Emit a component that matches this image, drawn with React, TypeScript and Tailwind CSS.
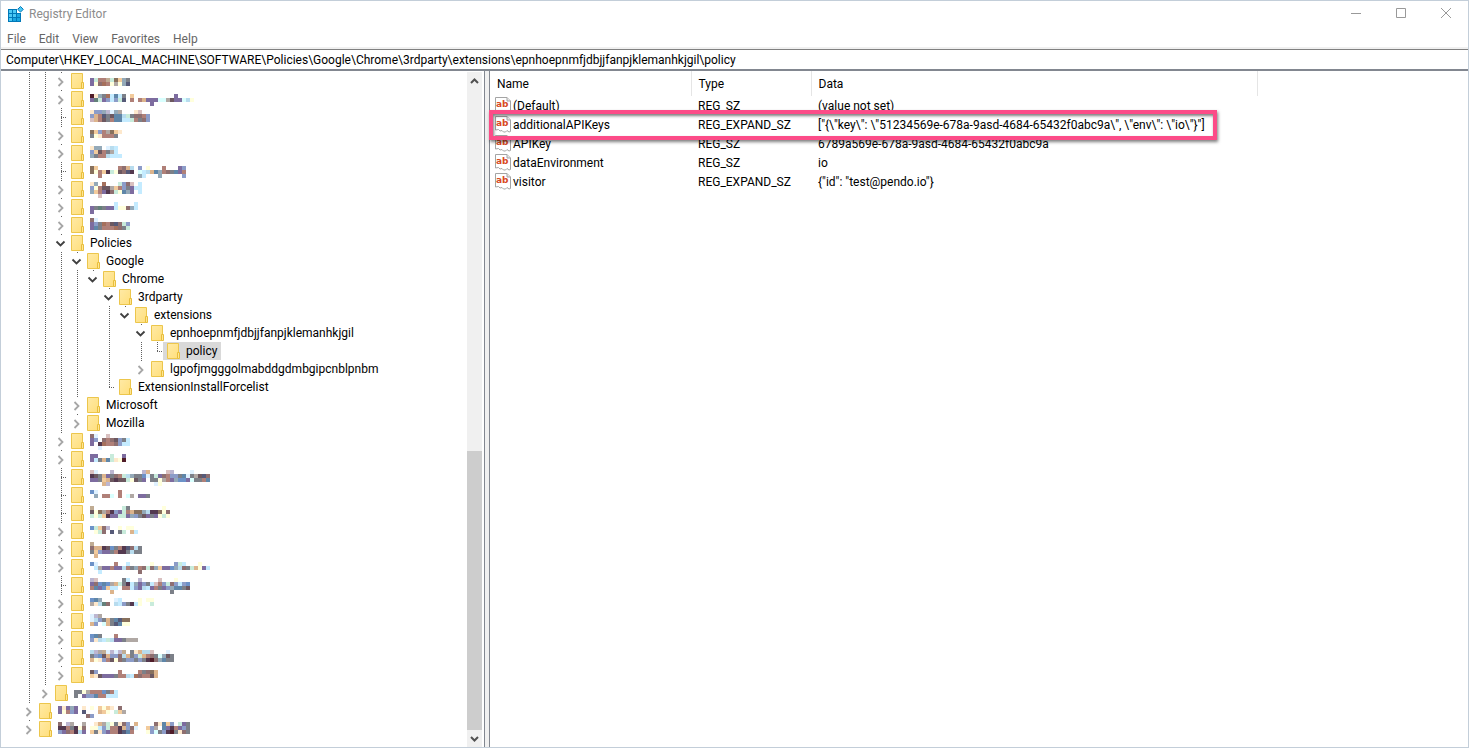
type TreeNode = {
  name: string;
  // one letter per 16px guide column, left to right
  guides: string;
  mosaic?: string[];
  selected?: boolean;
};

type RegistryValue = { name: string; type: string; data: string };

const REGISTRY_PATH =
  "Computer\\HKEY_LOCAL_MACHINE\\SOFTWARE\\Policies\\Google\\Chrome\\3rdparty\\extensions\\epnhoepnmfjdbjjfanpjklemanhkjgil\\policy";

const MENU = ["File", "Edit", "View", "Favorites", "Help"];

const COLORS: Record<string, string> = {
  p: "#7d6c9f",
  d: "#53394f",
  k: "#565a78",
  n: "#64807a",
  r: "#b08078",
  b: "#a5705c",
  o: "#87705c",
  t: "#dcb48c",
  m: "#f2cb9c",
  c: "#fde8cc",
  y: "#ffffdc",
  a: "#d9fffe",
  s: "#c4ebff",
  w: "#dff1ff",
  e: "#b8dcee",
  u: "#6c92c8",
  v: "#5f86a8",
  i: "#8c9cc8",
  h: "#94a9b8",
  q: "#c8ebdb",
  x: "#b0a8a4",
  z: "#c0ac94",
  f: "#8e6f70",
  j: "#6c5860",
  g: "#7c8088",
  L: "#bcb6d0",
  K: "#4f1c28",
  P: "#d9c0c0",
};

// guides: l = line, b = blank, t = tee, e = elbow, c = collapsed, o = open, x = open last child, z = collapsed last child
const TREE: TreeNode[] = [
  { name: "", guides: "llc", mosaic: ["", "pqrrzqomhg", "pyfbryxyhk"] },
  { name: "", guides: "llc", mosaic: ["", "Kchgbsvsg.m..........p", "pnqpisiqk.r.rtpppaaxjppaey", "...............p"] },
  { name: "", guides: "llt", mosaic: ["ciihLwhx...cP", "itrkgjvveqgffri", "Ptrjgrvvssqrgfi"] },
  { name: "", guides: "llc", mosaic: ["", "omirxomc", "gycrrrg"] },
  { name: "", guides: "llc", mosaic: ["chh.wes", "imjrgxs", "hgrresss"] },
  { name: "", guides: "llt", mosaic: ["", "om.....rfte.i.y...r...pi", "oyrmdqyjfkd.asetvhrfgvpr", "..r.........hs...h.....i"] },
  { name: "", guides: "llc", mosaic: ["ch.b...qifP.s", "iyrjjxmrigpss", "hmrpdfqyvhp.s", "..P"] },
  { name: "", guides: "llc", mosaic: ["", "......s....s", "pgngppsyyfhs", "p"] },
  { name: "", guides: "llc", mosaic: ["fw", "pigbrjkfqi", "pvgrrrbfgq"] },
  { name: "Policies", guides: "llo" },
  { name: "Google", guides: "lllo" },
  { name: "Chrome", guides: "llllx" },
  { name: "3rdparty", guides: "llllbo" },
  { name: "extensions", guides: "llllblx" },
  { name: "epnhoepnmfjdbjjfanpjklemanhkjgil", guides: "llllblbo" },
  { name: "policy", guides: "llllblble", selected: true },
  { name: "lgpofjmgggolmabddgdmbgipcnblpnbm", guides: "llllblbz" },
  { name: "ExtensionInstallForcelist", guides: "llllbe" },
  { name: "Microsoft", guides: "lllc" },
  { name: "Mozilla", guides: "lllz" },
  { name: "", guides: "llc", mosaic: ["fw..P", "pi.frfjigs", "p.dbrrfiss", "..w"] },
  { name: "", guides: "llc", mosaic: ["", "pp...q..p", "psgtvqcyK"] },
  { name: "", guides: "llt", mosaic: ["Pw...L.......Lt....PL....w", "djgtpgfrqehgguwgqpfriigvwgxjkf", "ppgmtjdjjqyjgp.ggyxrphuupaggrv", "...tL...........wy"] },
  { name: "", guides: "llt", mosaic: ["", "uw.....r", ".h.rra.r.ax.ppg"] },
  { name: "", guides: "llt", mosaic: ["z.......qg........y", "jyoxrdipqrtooheddoyf", "qyqmdppqqphigjpgpyqy"] },
  { name: "", guides: "llc", mosaic: ["", "uqmfL..y.yy", ".yqf.k.gq.ts"] },
  { name: "", guides: "llc", mosaic: ["z", "fttdjugrdkfeg", "gmippgrddgegg", ".t"] },
  { name: "", guides: "llc", mosaic: ["", "uw....r..s.....y.....iqs...y", ".sxpprpperghrfqfhmppuhefgqtyps", "..s.........f"] },
  { name: "", guides: "llt", mosaic: ["LP......gs..L....P...y", "pfuvuxtqgdshpigsPriqfisiu", "rvpumss.rrsipesprgpihvvgj", ".....t..............g"] },
  { name: "", guides: "llc", mosaic: ["", "uvh...ws....y.yy", "xcenf.esigdsy..q"] },
  { name: "", guides: "llc", mosaic: ["wLx", "weigtgvkoo", "ti.atgkvyy"] },
  { name: "", guides: "llc", mosaic: ["", "uvg...r", "icesqeppgxxx"] },
  { name: "", guides: "llc", mosaic: ["eLxzwLwLz.gcteeP...w", "giujtiifetgiqtrfgahjg", "tycirjyfgiigigdKfhvgg"] },
  { name: "", guides: "llz", mosaic: ["", "ji.....r....rgfot", "mcjpppgrresbfrrjt"] },
  { name: "", guides: "lz", mosaic: ["", "ggyxrrrugrs", "g.piivrrsss"] },
  { name: "", guides: "c", mosaic: ["", "pcphp.c.y.mymc.f.", "pyrip.k...tmy.qmx", ".......fi"] },
  { name: "", guides: "z", mosaic: ["f.Lx..x..ctxqygcfi.t....fcvmi.qpg", "ddrgdyf.yysiqrrdtifw..mix.vpdrpig", "ipfrdep.mgciprrdkvr...yiagidKgcfg"] },
];

const VALUES: RegistryValue[] = [
  { name: "(Default)", type: "REG_SZ", data: "(value not set)" },
  {
    name: "additionalAPIKeys",
    type: "REG_EXPAND_SZ",
    data: '["{\\"key\\": \\"51234569e-678a-9asd-4684-65432f0abc9a\\", \\"env\\": \\"io\\"}"]',
  },
  { name: "APIKey", type: "REG_SZ", data: "6789a569e-678a-9asd-4684-65432f0abc9a" },
  { name: "dataEnvironment", type: "REG_SZ", data: "io" },
  { name: "visitor", type: "REG_EXPAND_SZ", data: '{"id": "test@pendo.io"}' },
];

function RegeditIcon() {
  return (
    <svg width="16" height="16" viewBox="0 0 16 16" aria-hidden="true">
      <path d="M0 3h9v4h4v9H0z" fill="#0078b8" />
      <path d="M1 4h3v3H1zM5 4h3v3H5zM1 8h3v3H1zM5 8h3v3H5zM1 12h3v3H1z" fill="#4cc8f4" />
      <path d="M9 8h3v3H9zM5 12h3v3H5zM9 12h3v3H9z" fill="#19a5e0" />
      <path d="M12.500 .5l2.800 2.800-2.800 2.800-2.800-2.800z" fill="#4cc8f4" stroke="#0078b8" />
    </svg>
  );
}

function FolderIcon() {
  return (
    <svg className="shrink-0" width="13" height="16" viewBox="0 0 13 16" aria-hidden="true">
      <defs>
        <linearGradient id="folder" x1="0" y1="0" x2="1" y2="1">
          <stop offset="0" stopColor="#ffeaa6" />
          <stop offset="1" stopColor="#ffdf7c" />
        </linearGradient>
      </defs>
      <path d="M.5 .5h11v15H.5z" fill="url(#folder)" stroke="#ecc64c" />
      <path d="M10.500 9.500h2v6h-2z" fill="#ffe694" stroke="#e8be3c" />
    </svg>
  );
}

function StringValueIcon() {
  return (
    <svg className="shrink-0" width="16" height="17" viewBox="0 0 16 17" aria-hidden="true">
      <path
        d="M.5 .5h11.500l3.500 3.500v11.500l-1.500 .5-2-1.500-1.500 1.500h-2l-1.500-1.500-2 .5-1.500-1.500-3 .5z"
        fill="#fff"
        stroke="#a4a4a4"
      />
      <path d="M12 .5v3.500h3.500" fill="#e8e8e8" stroke="#a4a4a4" />
      <text x="1" y="10" fontSize="9" fontWeight="700" fill="#d8481f" fontFamily="DejaVu Sans, sans-serif">
        ab
      </text>
    </svg>
  );
}

function Guide({ kind, last }: { kind: string; last: boolean }) {
  return (
    <svg className="shrink-0" width={last ? 14 : 16} height="18" viewBox={last ? "0 0 14 18" : "0 0 16 18"} aria-hidden="true">
      <g stroke="#606060" strokeDasharray="1 1" shapeRendering="crispEdges">
        {(kind === "l" || kind === "t") && <path d="M8.500 0v18" />}
        {kind === "e" && <path d="M8.500 0v10" />}
        {(kind === "t" || kind === "e") && <path d="M8 9.500h6" />}
        {"coxz".includes(kind) && <path d="M8.500 0v1" />}
      </g>
      {(kind === "c" || kind === "z") && <path d="M5.500 6l4 4-4 4" fill="none" stroke="#a6a6a6" strokeWidth="1.800" />}
      {(kind === "o" || kind === "x") && <path d="M3.500 7.500l4 4 4-4" fill="none" stroke="#404040" strokeWidth="1.800" />}
    </svg>
  );
}

function Mosaic({ rows, odd }: { rows: string[]; odd: boolean }) {
  const top = odd ? 0 : 2;
  const width = Math.max(...rows.map((r) => r.length)) * 4;
  return (
    <svg width={width} height="18" viewBox={`0 0 ${width} 18`} shapeRendering="crispEdges" aria-hidden="true">
      {rows.map((row, y) =>
        row.split("").map((cell, x) =>
          cell === "." ? null : (
            <rect key={`${x}-${y}`} x={x * 4} y={top + y * 4} width="4" height="4" fill={COLORS[cell]} />
          )
        )
      )}
    </svg>
  );
}

function TreeRow({ node, index }: { node: TreeNode; index: number }) {
  const guides = node.guides.split("");
  return (
    <li
      role="treeitem"
      aria-level={guides.length}
      aria-selected={!!node.selected}
      aria-label={node.name || "Hidden key"}
      className="flex h-[18px]"
    >
      {guides.map((kind, i) => (
        <Guide key={i} kind={kind} last={i === guides.length - 1} />
      ))}
      <span className={`flex items-center gap-[6px] px-1 ${node.selected ? "bg-[#d9d9d9]" : ""}`}>
        <FolderIcon />
        {node.mosaic ? (
          <Mosaic rows={node.mosaic} odd={index % 2 === 1} />
        ) : (
          <span className="whitespace-nowrap leading-[18px]">{node.name}</span>
        )}
      </span>
    </li>
  );
}

function TitleBar() {
  return (
    <header className="flex h-[26px] items-center justify-between pl-[7px]">
      <div className="flex items-center gap-[5px]">
        <RegeditIcon />
        <h1 className="text-[#8c8c8c]">Registry Editor</h1>
      </div>
      <div className="flex h-full text-[#999999]">
        <button aria-label="Minimize" className="flex h-6 w-[45px] items-center justify-center">
          <svg width="10" height="10" viewBox="0 0 10 10" stroke="currentColor">
            <path d="M0 5.500h10" />
          </svg>
        </button>
        <button aria-label="Maximize" className="flex h-6 w-[45px] items-center justify-center">
          <svg width="10" height="10" viewBox="0 0 10 10" stroke="currentColor" fill="none">
            <path d="M.5 .5h9v9h-9z" />
          </svg>
        </button>
        <button aria-label="Close" className="flex h-6 w-[45px] items-center justify-center">
          <svg width="10" height="10" viewBox="0 0 10 10" stroke="currentColor">
            <path d="M0 0l10 10M10 0L0 10" />
          </svg>
        </button>
      </div>
    </header>
  );
}

function ScrollBar() {
  return (
    <div className="mr-[2px] flex w-[15px] shrink-0 flex-col bg-[#f0f0f0] text-[#505050]">
      <button aria-label="Scroll up" className="flex h-[18px] items-center justify-center">
        <svg width="9" height="6" viewBox="0 0 9 6" fill="none" stroke="currentColor" strokeWidth="2">
          <path d="M1 5l3.500-3.500L8 5" />
        </svg>
      </button>
      <div className="grow-[362] basis-0" />
      <div className="grow-[279] basis-0 bg-[#cdcdcd]" />
      <button aria-label="Scroll down" className="flex h-[17px] items-center justify-center">
        <svg width="9" height="6" viewBox="0 0 9 6" fill="none" stroke="currentColor" strokeWidth="2">
          <path d="M1 1l3.500 3.500L8 1" />
        </svg>
      </button>
    </div>
  );
}

function ValueTable() {
  return (
    <div className="relative">
      <table className="w-full table-fixed border-collapse text-left">
        <colgroup>
          <col className="w-[201px]" />
          <col className="w-[120px]" />
          <col className="w-[446px]" />
          <col />
        </colgroup>
        <thead>
          <tr className="h-[25px]">
            <th className="border-r border-[#e5e5e5] pl-[7px] font-normal">Name</th>
            <th className="border-r border-[#e5e5e5] pl-[7px] font-normal">Type</th>
            <th className="border-r border-[#e5e5e5] pl-[7px] font-normal">Data</th>
            <td />
          </tr>
        </thead>
        <tbody className="leading-[17px]">
          {VALUES.map((value) => (
            <tr key={value.name} className="h-[19px]">
              <td className="p-0 pl-[5px]">
                <span className="flex h-[19px] items-center gap-[2px]">
                  <StringValueIcon />
                  <span className="pt-[2px]">{value.name}</span>
                </span>
              </td>
              <td className="p-0 pt-[2px] pl-[7px]">{value.type}</td>
              <td className="whitespace-nowrap p-0 pt-[2px] pl-[7px]">{value.data}</td>
              <td />
            </tr>
          ))}
        </tbody>
      </table>
      {/* Highlight around additionalAPIKeys */}
      <div className="pointer-events-none absolute -left-px top-[39px] h-[30px] w-[728px] border-4 border-[#fc4c88] shadow-[1px_2px_3px_rgba(0,0,0,0.5),inset_1px_2px_3px_rgba(0,0,0,0.5)]" />
    </div>
  );
}

export default function App() {
  return (
    <div className="flex min-h-screen flex-col border border-[#c3ced9] bg-white font-[Roboto,sans-serif] text-[12px] leading-4 text-black">
      <TitleBar />
      <nav className="flex h-[22px] items-start gap-[13px] border-b-2 border-[#f0f0f0] pl-[6px] text-[#666666]">
        {MENU.map((item) => (
          <button key={item} className="leading-6">
            {item}
          </button>
        ))}
      </nav>
      <div className="flex h-[22px] border-t border-b-2 border-t-[#808080] border-b-[#828790]">
        <input
          aria-label="Registry path"
          defaultValue={REGISTRY_PATH}
          className="w-full bg-transparent pl-[5px] outline-none"
        />
      </div>
      <main className="flex flex-1">
        <section className="flex w-[484px] shrink-0 border-r border-[#828790] pt-px">
          <ul role="tree" aria-label="Registry keys" className="flex-1 overflow-hidden pb-2 pl-5">
            {TREE.map((node, i) => (
              <TreeRow key={i} node={node} index={i} />
            ))}
          </ul>
          <ScrollBar />
        </section>
        <div className="w-1 shrink-0 bg-[#f0f0f0]" />
        <section className="min-w-0 flex-1 border-l border-[#828790]">
          <ValueTable />
        </section>
      </main>
    </div>
  );
}
